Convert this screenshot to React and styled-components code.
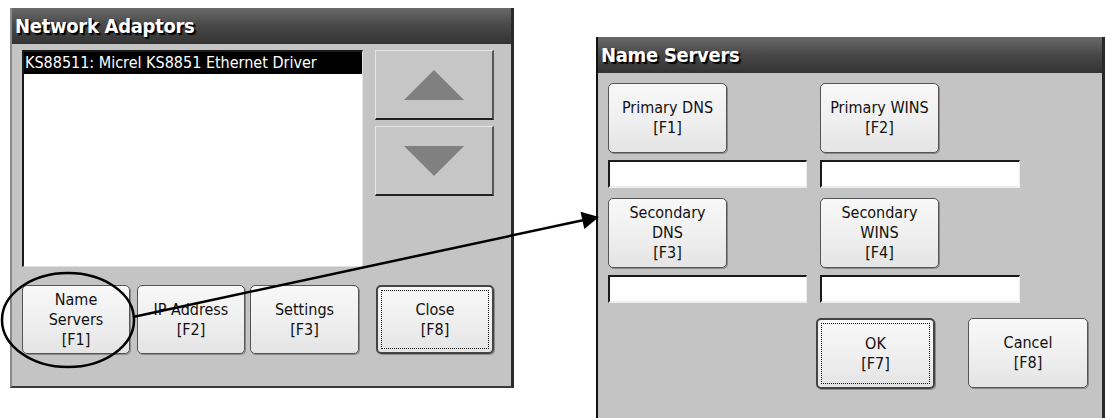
import React from "react";
import styled, { createGlobalStyle } from "styled-components";

const GlobalStyle = createGlobalStyle`
  html, body {
    margin: 0;
    padding: 0;
    background: #ffffff;
  }
  body {
    font-family: "DejaVu Sans Condensed", "DejaVu Sans", "Liberation Sans", sans-serif;
  }
`;

const Desktop = styled.div`
  position: relative;
  width: 1106px;
  height: 418px;
  overflow: hidden;
  background: #ffffff;
`;

const Window = styled.div`
  position: absolute;
  left: ${(p) => p.$left}px;
  top: ${(p) => p.$top}px;
  width: ${(p) => p.$width}px;
  height: ${(p) => p.$height}px;
  box-sizing: border-box;
  background: #c4c4c4;
  border-left: 2px solid ${(p) => (p.$dark ? "#111" : "#8a8a8a")};
  border-right: 3px solid #2a2a2a;
  border-bottom: ${(p) => (p.$noBottom ? "none" : "2px solid #3a3a3a")};
  display: flex;
  flex-direction: column;
`;

const TitleBar = styled.div`
  height: 36px;
  flex: none;
  background: linear-gradient(#6a6a6a, #4a4a4a 45%, #333333);
  color: #ffffff;
  font-family: "DejaVu Sans Condensed", "DejaVu Sans", sans-serif;
  font-weight: bold;
  font-size: 20px;
  display: flex;
  align-items: center;
  padding-left: 3px;
  text-shadow: 1px 1px 0 #000, 2px 2px 1px #000;
  letter-spacing: -0.3px;
`;

const LeftBody = styled.div`
  flex: 1;
  padding: 6px 16px 0 10px;
  display: flex;
  flex-direction: column;
`;

const TopArea = styled.div`
  display: flex;
  gap: 12px;
  height: 217px;
`;

const ListBox = styled.div`
  width: 341px;
  box-sizing: border-box;
  background: #ffffff;
  border-top: 2px solid #1a1a1a;
  border-left: 2px solid #1a1a1a;
  border-right: 1px solid #e0e0e0;
  border-bottom: 1px solid #e0e0e0;
`;

const ListItem = styled.div`
  height: 22px;
  line-height: 22px;
  background: ${(p) => (p.$selected ? "#000" : "transparent")};
  color: ${(p) => (p.$selected ? "#fff" : "#000")};
  font-size: 16px;
  padding-left: 1px;
  white-space: nowrap;
`;

const ScrollColumn = styled.div`
  display: flex;
  flex-direction: column;
  gap: 6px;
`;

const ScrollButton = styled.div`
  width: 119px;
  height: ${(p) => p.$h}px;
  box-sizing: border-box;
  background: #c6c6c6;
  border-top: 1px solid #e6e6e6;
  border-left: 1px solid #e6e6e6;
  border-right: 2px solid #555;
  border-bottom: 2px solid #222;
  display: flex;
  align-items: center;
  justify-content: center;
`;

const ButtonRow = styled.div`
  display: flex;
  margin-top: 18px;
`;

const PanelButton = styled.div`
  width: ${(p) => p.$w}px;
  height: ${(p) => p.$h}px;
  margin-left: ${(p) => p.$ml || 0}px;
  box-sizing: border-box;
  border: ${(p) => (p.$default ? "2px solid #444" : "1px solid #555")};
  border-radius: 5px;
  background: linear-gradient(#f8f8f8, #efefef 55%, #e4e4e4);
  box-shadow: 1px 1px 0 #8a8a8a;
  display: flex;
  flex-direction: column;
  align-items: center;
  justify-content: center;
  font-size: 16px;
  line-height: 20px;
  color: #111;
  text-align: center;
  padding: ${(p) => (p.$default ? "3px" : "0")};
`;

const FocusRect = styled.div`
  box-sizing: border-box;
  width: 100%;
  height: 100%;
  border: 1px dotted #111;
  display: flex;
  flex-direction: column;
  align-items: center;
  justify-content: center;
`;

const RightBody = styled.div`
  flex: 1;
  padding: 10px 14px 0 10px;
  display: flex;
  flex-direction: column;
`;

const FieldGrid = styled.div`
  display: grid;
  grid-template-columns: 200px 200px;
  column-gap: 12px;
  row-gap: 10px;
`;

const FieldCell = styled.div`
  display: flex;
  flex-direction: column;
  gap: 7px;
`;

const TextField = styled.div`
  width: ${(p) => p.$w}px;
  height: 28px;
  box-sizing: border-box;
  background: #ffffff;
  border-top: 2px solid #1a1a1a;
  border-left: 2px solid #1a1a1a;
  border-right: 1px solid #eeeeee;
  border-bottom: 2px solid #eeeeee;
`;

const DialogFooter = styled.div`
  display: flex;
  justify-content: flex-end;
  gap: 33px;
  margin-top: 15px;
`;

const Overlay = styled.svg`
  position: absolute;
  left: 0;
  top: 0;
  pointer-events: none;
`;

const Label = ({ lines }) =>
  lines.map((l, i) => <span key={i}>{l}</span>);

const Triangle = ({ up }) => (
  <svg width="62" height="32" viewBox="0 0 62 32">
    <polygon
      points={up ? "31,1 61,31 1,31" : "1,1 61,1 31,31"}
      fill="#808080"
    />
  </svg>
);

export default function App() {
  return (
    <Desktop>
      <GlobalStyle />
      <Window $left={10} $top={8} $width={504} $height={380}>
        <TitleBar>Network Adaptors</TitleBar>
        <LeftBody>
          <TopArea>
            <ListBox>
              <ListItem $selected>KS88511: Micrel KS8851 Ethernet Driver</ListItem>
            </ListBox>
            <ScrollColumn>
              <ScrollButton $h={70}>
                <Triangle up />
              </ScrollButton>
              <ScrollButton $h={70}>
                <Triangle />
              </ScrollButton>
            </ScrollColumn>
          </TopArea>
          <ButtonRow>
            <PanelButton $w={108} $h={69}>
              <Label lines={["Name", "Servers", "[F1]"]} />
            </PanelButton>
            <PanelButton $w={108} $h={69} $ml={7}>
              <Label lines={["IP Address", "[F2]"]} />
            </PanelButton>
            <PanelButton $w={109} $h={69} $ml={5}>
              <Label lines={["Settings", "[F3]"]} />
            </PanelButton>
            <PanelButton $w={118} $h={69} $ml={17} $default>
              <FocusRect>
                <Label lines={["Close", "[F8]"]} />
              </FocusRect>
            </PanelButton>
          </ButtonRow>
        </LeftBody>
      </Window>

      <Window $left={596} $top={37} $width={509} $height={400} $dark $noBottom>
        <TitleBar>Name Servers</TitleBar>
        <RightBody>
          <FieldGrid>
            <FieldCell>
              <PanelButton $w={119} $h={70}>
                <Label lines={["Primary DNS", "[F1]"]} />
              </PanelButton>
              <TextField $w={199} />
            </FieldCell>
            <FieldCell>
              <PanelButton $w={119} $h={70}>
                <Label lines={["Primary WINS", "[F2]"]} />
              </PanelButton>
              <TextField $w={200} />
            </FieldCell>
            <FieldCell>
              <PanelButton $w={119} $h={70}>
                <Label lines={["Secondary", "DNS", "[F3]"]} />
              </PanelButton>
              <TextField $w={199} />
            </FieldCell>
            <FieldCell>
              <PanelButton $w={119} $h={70}>
                <Label lines={["Secondary", "WINS", "[F4]"]} />
              </PanelButton>
              <TextField $w={200} />
            </FieldCell>
          </FieldGrid>
          <DialogFooter>
            <PanelButton $w={119} $h={71} $default>
              <FocusRect>
                <Label lines={["OK", "[F7]"]} />
              </FocusRect>
            </PanelButton>
            <PanelButton $w={120} $h={70}>
              <Label lines={["Cancel", "[F8]"]} />
            </PanelButton>
          </DialogFooter>
        </RightBody>
      </Window>

      <Overlay width="1106" height="418" viewBox="0 0 1106 418">
        <ellipse cx="68" cy="320" rx="66" ry="47" fill="none" stroke="#000" strokeWidth="2.5" />
        <line x1="133" y1="317" x2="584" y2="220" stroke="#000" strokeWidth="2.5" />
        <polygon points="599,217 584.3,229 580.5,211.8" fill="#000" />
      </Overlay>
    </Desktop>
  );
}
